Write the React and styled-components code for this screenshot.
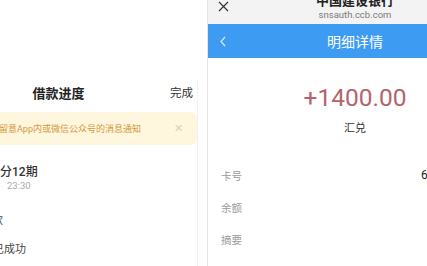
import React from 'react';
import styled, {createGlobalStyle} from "styled-components";

const GlobalStyle = createGlobalStyle`
    html, body {
        margin : 0;
        padding : 0;
        background : #fff;
        font-family : Roboto, "Noto Sans CJK SC", sans-serif;
    }
`;

const Page = styled.div`
    width : 427px;
    height : 266px;
    display : flex;
    overflow : hidden;
    background : #fff;
`;

/* 왼쪽 스크린 (잘린 화면) */
const LeftPane = styled.div`
    width : 207px;
    height : 266px;
    overflow : hidden;
    flex-shrink : 0;
`;

const LeftScreen = styled.div`
    width : 278px;
    height : 266px;
    margin-left : -80px;
    background : #fff;
    border-right : 1px solid #f1f2f4;
    box-sizing : border-box;
`;

const NavBar = styled.div`
    margin-top : 80px;
    height : 24px;
    position : relative;
    display : flex;
    align-items : center;
    justify-content : center;
    .title{
        font-size : 13px;
        font-weight : 700;
        color : #222;
    }
    .done{
        position : absolute;
        right : 4px;
        font-size : 11.5px;
        color : #333;
    }
`;

const Notice = styled.div`
    margin : 8px 0 0 0;
    height : 33px;
    background : #fff6de;
    border-radius : 0 6px 6px 0;
    display : flex;
    align-items : center;
    padding-left : 79px;
    padding-right : 14px;
    color : #d3993f;
    font-size : 9px;
    .text{
        flex : 1;
        white-space : nowrap;
    }
    .close{
        font-size : 11px;
        color : #e6cfa6;
    }
`;

const Item = styled.div`
    padding-left : 80px;
    margin-top : ${p => p.$top}px;
    font-size : ${p => p.$size}px;
    color : ${p => p.$color};
    line-height : 1.2;
    white-space : nowrap;
    font-weight : ${p => p.$bold ? 500 : 400};
`;

const Cut = styled.span`
    display : inline-block;
    margin-left : ${p => p.$shift}px;
`;

/* 오른쪽 스크린 */
const RightPane = styled.div`
    flex : 1;
    height : 266px;
    overflow : hidden;
    border-left : 1px solid #e4e4e4;
`;

const RightScreen = styled.div`
    width : 294px;
`;

const BrowserBar = styled.div`
    height : 24px;
    background : #f3f3f3;
    position : relative;
    display : flex;
    flex-direction : column;
    align-items : center;
    .close{
        position : absolute;
        left : 10px;
        top : 1px;
        width : 11px;
        height : 11px;
    }
    .name{
        margin-top : -7px;
        font-size : 13px;
        font-weight : 700;
        color : #222;
        line-height : 16px;
    }
    .url{
        font-size : 9.5px;
        color : #7a7a7a;
        line-height : 12px;
    }
`;

const BlueBar = styled.div`
    height : 34px;
    background : #3d9cf2;
    position : relative;
    display : flex;
    align-items : center;
    justify-content : center;
    color : #fff;
    font-size : 14px;
    svg{
        position : absolute;
        left : 12px;
        top : 12px;
    }
`;

const Amount = styled.div`
    text-align : center;
    margin-top : 24px;
    font-size : 24.5px;
    color : #b4646c;
    line-height : 32px;
`;

const Kind = styled.div`
    text-align : center;
    margin-top : 5px;
    font-size : 11px;
    color : #333;
`;

const Rows = styled.div`
    margin-top : 32px;
    display : flex;
    flex-direction : column;
    gap : 16px;
`;

const Row = styled.div`
    display : grid;
    grid-template-columns : 200px 1fr;
    padding-left : 13px;
    height : 16px;
    align-items : center;
    font-size : 10.5px;
    .label{
        color : #9a9a9a;
    }
    .value{
        color : #222;
        font-size : 12px;
    }
`;

const App = () => {
    return (
        <>
            <GlobalStyle />
            <Page>
                <LeftPane>
                    <LeftScreen>
                        <NavBar>
                            <span className="title">借款进度</span>
                            <span className="done">完成</span>
                        </NavBar>
                        <Notice>
                            <span className="text">留意App内或微信公众号的消息通知</span>
                            <span className="close">✕</span>
                        </Notice>
                        <Item $top={20} $size={12} $color="#333" $bold>分12期</Item>
                        <Item $top={1} $size={9.5} $color="#aaa"><Cut $shift={7}>23:30</Cut></Item>
                        <Item $top={22} $size={11} $color="#444"><Cut $shift={-8}>款</Cut></Item>
                        <Item $top={16} $size={11} $color="#444"><Cut $shift={-7}>已成功</Cut></Item>
                    </LeftScreen>
                </LeftPane>
                <RightPane>
                    <RightScreen>
                        <BrowserBar>
                            <svg className="close" viewBox="0 0 11 11">
                                <path d="M1 1 L10 10 M10 1 L1 10" stroke="#333" strokeWidth="1.2" fill="none"/>
                            </svg>
                            <span className="name">中国建设银行</span>
                            <span className="url">snsauth.ccb.com</span>
                        </BrowserBar>
                        <BlueBar>
                            <svg width="6" height="11" viewBox="0 0 6 11">
                                <path d="M5 1 L1 5.5 L5 10" stroke="#cfe6ff" strokeWidth="1.3" fill="none"/>
                            </svg>
                            明细详情
                        </BlueBar>
                        <Amount>+1400.00</Amount>
                        <Kind>汇兑</Kind>
                        <Rows>
                            <Row><span className="label">卡号</span><span className="value">6217</span></Row>
                            <Row><span className="label">余额</span><span className="value"></span></Row>
                            <Row><span className="label">摘要</span><span className="value"></span></Row>
                        </Rows>
                    </RightScreen>
                </RightPane>
            </Page>
        </>
    );
};

export default App;
